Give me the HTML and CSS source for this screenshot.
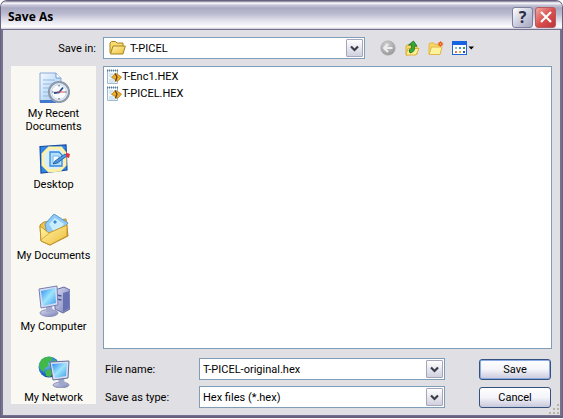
FILE: index.html
```html
<!DOCTYPE html>
<html lang="en">
<head>
<meta charset="utf-8">
<title>Save As</title>
<link rel="stylesheet" href="styles.css">
</head>
<body>
<svg class="defs" aria-hidden="true">
  <defs>
    <linearGradient id="blue" x1="0" y1="0" x2="1" y2="1"><stop offset="0" stop-color="#2a8cf0"/><stop offset=".5" stop-color="#9ee4fc"/><stop offset="1" stop-color="#3d9cec"/></linearGradient>
    <linearGradient id="gold" x1="0" y1="0" x2="1" y2="1"><stop offset="0" stop-color="#fff6a8"/><stop offset="1" stop-color="#eebc3c"/></linearGradient>
    <linearGradient id="steel" x1="0" y1="0" x2="1" y2="1"><stop offset="0" stop-color="#d8daf2"/><stop offset="1" stop-color="#7880b4"/></linearGradient>
    <linearGradient id="paper" x1="0" y1="0" x2="1" y2="1"><stop offset="0" stop-color="#f4faff"/><stop offset="1" stop-color="#9cc4ee"/></linearGradient>
    <radialGradient id="globe" cx=".35" cy=".3" r=".75"><stop offset="0" stop-color="#8fe0ff"/><stop offset=".6" stop-color="#2878d8"/><stop offset="1" stop-color="#123c94"/></radialGradient>
    <radialGradient id="grey" cx=".4" cy=".3" r=".7"><stop offset="0" stop-color="#d2d2d4"/><stop offset="1" stop-color="#98989c"/></radialGradient>
    <symbol id="chevron" viewBox="0 0 9 7"><path d="M1 1.5 4.5 5 8 1.5" fill="none" stroke="#3a3c48" stroke-width="2.2"/></symbol>
    <symbol id="hexfile" viewBox="0 0 16 16">
      <path d="M1.500 1.500h10v13h-10z" fill="#f2f8fd" stroke="#a4b8cc"/>
      <path d="M1 1.500h11" stroke="#5b7d98" stroke-width="2" stroke-dasharray="1 1"/>
      <path d="M3 5h4M3 7h3M3 11h5M3 13h6" stroke="#b5d5ea"/>
      <path d="M5.500 8.500 9 4.500l2 .5 4.500 3-3 3.500-3 1L9 10z" fill="#eeae2c" stroke="#b87d1c" stroke-width=".8"/>
      <path d="M9 4.500 11 8l-1.500 4" fill="none" stroke="#5e4319" stroke-width="1.300"/>
    </symbol>
  </defs>
</svg>
<main class="window">
  <header class="titlebar">
    <h1>Save As</h1>
    <button class="cap help" type="button" aria-label="Help">?</button>
    <button class="cap close" type="button" aria-label="Close"><svg viewBox="0 0 12 12"><path d="M1 1l10 10M11 1L1 11" stroke="#fff" stroke-width="2.200"/></svg></button>
  </header>
  <form class="content">
    <div class="lookin">
      <label for="folder">Save in:</label>
      <div class="combo">
        <svg class="folder" viewBox="0 0 17 16"><path d="M1 13V3l1.500-1.500h4L8 3h6v3" fill="#f8dc70" stroke="#a88420"/><path d="M1.500 14 4 6h12.300L14 14z" fill="url(#gold)" stroke="#a88420"/></svg>
        <select id="folder"><option>T-PICEL</option></select>
        <span class="drop"><svg><use href="#chevron"/></svg></span>
      </div>
      <div class="tools">
        <button type="button" aria-label="Back"><svg viewBox="0 0 16 16"><circle cx="8" cy="8" r="7.300" fill="url(#grey)" stroke="#b4b4b8" stroke-width=".6"/><path d="M12.500 8H4.500M8 4 4 8l4 4" fill="none" stroke="#eee" stroke-width="2"/></svg></button>
        <button type="button" aria-label="Up one level"><svg viewBox="0 0 16 16"><path d="M2 15V6l1-1h3l1 1h6v8z" fill="#f6d766" stroke="#d9b03c"/><path d="M2 15 4 8.500h11L12 15z" fill="#fff090" stroke="#dfb23a"/><path d="M6 13c4-1 5-3 4.500-7H13L9.500 1 4.500 5h3c.5 3-.5 4-2.500 5z" fill="#38a838" stroke="#137022" stroke-width=".8"/></svg></button>
        <button type="button" aria-label="New folder"><svg viewBox="0 0 16 16"><path d="M1 14V4l1-1h4l1 1.500h5V14z" fill="#f6d766" stroke="#e2b94a"/><path d="M1 14.500 3.500 7H14l-2 7.500z" fill="#fff39c" stroke="#e4b648"/><path d="M12.500 1v6M9.500 4h6M10.500 2l4 4M14.500 2l-4 4" stroke="#f08040"/><circle cx="12.500" cy="4" r="2" fill="#e94f1c"/><circle cx="12.500" cy="4" r=".8" fill="#ffd35e"/></svg></button>
        <button class="views" type="button" aria-label="View menu"><svg viewBox="0 0 22 16"><rect x=".5" y="1.500" width="14" height="13" fill="#fff" stroke="#1e68d8"/><path d="M0 3h15" stroke="#1764e0" stroke-width="4"/><path d="M3 7h2v2H3z" fill="#98b4c8"/><path d="M7 7h2v2H7z" fill="#468ec8"/><path d="M11 7h2v2h-2z" fill="#38a050"/><path d="M3 11h2v2H3z" fill="#e87848"/><path d="M7 11h2v2H7z" fill="#e0b838"/><path d="M11 11h2v2h-2z" fill="#2848c0"/><path d="M16.500 6.500h5.500l-2.700 3z" fill="#000"/></svg></button>
      </div>
    </div>
    <nav class="places">
      <a href="#recent"><svg viewBox="0 0 32 32"><path d="M2 1h16l5 5v24H2z" fill="url(#paper)" stroke="#8aa8d8"/><path d="M18 1v5h5" fill="#fff" stroke="#6f98d0"/><path d="M5 8h12M5 12h10M5 16h6M5 20h5M5 24h6" stroke="#8db9e8"/><path d="M2 28h16v3H2z" fill="#3f78cc"/><circle cx="21" cy="20" r="10" fill="#e9f2fb" stroke="#8c98ac" stroke-width="2.200"/><circle cx="21" cy="20" r="7.500" fill="#f8fcff" stroke="#c6d4e4"/><path d="M21 13v1.500M21 26v1.500M14 20h1.500M27 20h1.500" stroke="#456"/><path d="M16 21l5-.5 4-5" fill="none" stroke="#244a8c" stroke-width="1.800"/><path d="M19 20h8" stroke="#e05050"/></svg>My Recent<br>Documents</a>
      <a href="#desktop"><svg viewBox="0 0 32 32"><path d="M2 3.500 28 2l1 25-26 3z" fill="#2f86e4" stroke="#174ca4" stroke-width="1.200"/><path d="M11 5h12l4 5v12l-5 5-11 1-6-6V11z" fill="#d8effc" stroke="#fff0a4" stroke-width="3"/><path d="M12 9h9l3 3v11H12z" fill="#b4e0fb" stroke="#3687d8" stroke-width="1.300"/><path d="M15 13h6v7h-6z" fill="#f2fbff" stroke="#78b6e8"/><path d="M17 18 27 11l2 2-10 7-4 1z" fill="#4e9ae0" stroke="#194f94" stroke-width=".8"/><path d="M28 9.500l4 1.500-1 4-3-1z" fill="#d83848"/></svg>Desktop</a>
      <a href="#documents"><svg viewBox="0 0 32 32"><path d="M2 11 6 8l22-3 2 17-18 9-9-4z" fill="#f1c546" stroke="#b48a28"/><path d="M7 10 16 0l14 9-12 15-9-4z" fill="#8fcbf6" stroke="#5a97d4"/><path d="M11 10l6-6 9 6-9 10z" fill="#c8edff"/><path d="M17 6l2 2-2 2-2-2z" fill="#3c8bd8"/><path d="M2 12 11 19 29 11v11L12 31 3 27z" fill="url(#gold)" stroke="#c39428"/><path d="M3 26 14 17" fill="none" stroke="#dcae3e"/></svg>My Documents</a>
      <a href="#computer"><svg viewBox="0 0 32 32"><path d="M17 5l9-3 6 3v19l-7 4-8-4z" fill="url(#steel)" stroke="#666caa"/><path d="M25 8v19l6-4V6z" fill="#6870b4"/><path d="M18.500 10l5 1M18.500 14l5 1" stroke="#4b568e" stroke-width="1.500"/><ellipse cx="11" cy="28" rx="9" ry="3.500" fill="url(#steel)" stroke="#898fb8"/><path d="M8 21h6l1 6H8z" fill="#a4aacf"/><path d="M1 4 19 1l1 19-17 3z" fill="#d8dcf0" stroke="#7580b8"/><path d="M3 6l14-3 1 15-13 3z" fill="url(#blue)"/></svg>My Computer</a>
      <a href="#network"><svg viewBox="0 0 32 32"><circle cx="11" cy="11" r="10.500" fill="url(#globe)"/><path d="M3 4c4-4 9-4 12-2l-3 4-2 1 1 3-4 2-1 4-4-3-1-4zM7 15l5-2 4 3-4 5-4-1zM16 3l4 3-2 4-3-2z" fill="#42b84a"/><ellipse cx="23" cy="29" rx="8" ry="2.800" fill="url(#steel)" stroke="#9094b4"/><path d="M20 22h6l1 7h-6z" fill="#a0a8ca"/><path d="M12 6l19-1-1 17-15 2z" fill="#d9def2" stroke="#646e98"/><path d="M14 8l15-1-1 13-11 2z" fill="url(#blue)"/></svg>My Network</a>
    </nav>
    <ul class="files">
      <li><svg><use href="#hexfile"/></svg>T-Enc1.HEX</li>
      <li><svg><use href="#hexfile"/></svg>T-PICEL.HEX</li>
    </ul>
    <div class="fields">
      <label for="name">File name:</label>
      <div class="combo"><input id="name" type="text" value="T-PICEL-original.hex"><span class="drop"><svg><use href="#chevron"/></svg></span></div>
      <button class="push default" type="submit">Save</button>
      <label for="type">Save as type:</label>
      <div class="combo"><select id="type"><option>Hex files (*.hex)</option></select><span class="drop"><svg><use href="#chevron"/></svg></span></div>
      <button class="push" type="button">Cancel</button>
    </div>
    <svg class="grip" viewBox="0 0 12 12" aria-hidden="true"><path d="M9 1h2v2H9zM5 5h2v2H5zM9 5h2v2H9zM1 9h2v2H1zM5 9h2v2H5zM9 9h2v2H9z" fill="#b8b4a8"/></svg>
  </form>
</main>
</body>
</html>
```
FILE: styles.css
```css
* { box-sizing: border-box; }
body { margin: 0; background: #fff; color: #000; font: 11px/13px Roboto, "Liberation Sans", sans-serif; }
button, input, select { font: inherit; color: inherit; margin: 0; }
svg { display: block; flex: none; }
.defs { position: absolute; width: 0; height: 0; }
.window {
  display: flex; flex-direction: column;
  min-height: calc(100vh - 1px);
  border: 1px solid #66627f; border-bottom-width: 2px;
  border-radius: 7px 7px 0 0; overflow: hidden;
  background: #e0dfe3;
}
.titlebar {
  display: flex; align-items: center; gap: 2px;
  height: 28px; padding: 4px 6px 0 7px;
  background: linear-gradient(#76728f 0, #fff 2px, #c8c8da 4px, #a9a9c2 7px, #bcbcd0 13px, #e4e4ee 20px, #fff 26px, #c8c8d8 28px);
}
h1 { flex: 1; margin: 0; font: bold 12px/16px "Open Sans", "Noto Sans", sans-serif; }
.cap { display: flex; align-items: center; justify-content: center; width: 21px; height: 21px; padding: 0; border: 1px solid #7c809c; border-radius: 3px; }
.help { background: linear-gradient(135deg, #fff, #c4c5d8 60%, #a8a9c2); font: bold 16px/18px "Open Sans", sans-serif; color: #2c2c44; }
.close { border-color: #b75b62; background: linear-gradient(135deg, #f0a8a2, #d9504e 50%, #bd3538); }
.close svg { width: 12px; height: 12px; }
.content {
  position: relative; flex: 1;
  display: grid; grid-template: auto 1fr auto / 85px minmax(0, 1fr); column-gap: 7px;
  padding: 7px 8px 7px;
  border: solid #75718f; border-width: 1px 2px;
}
.lookin { grid-column: 1 / -1; display: grid; grid-template-columns: 85px minmax(0, 261fr) minmax(0, 180fr); column-gap: 7px; align-items: center; margin-bottom: 7px; }
.lookin label { text-align: right; }
.combo { display: flex; align-items: center; height: 22px; padding: 1px; border: 1px solid #7f9db9; background: #fff; }
.combo select, .combo input { flex: 1; min-width: 0; height: 18px; padding: 0 2px; border: 0; outline: 0; background: none; appearance: none; }
.folder { width: 17px; height: 16px; margin: 0 2px 0 4px; }
.drop { display: flex; align-items: center; justify-content: center; width: 17px; height: 18px; border: 1px solid #a5a6bc; border-radius: 1px; background: linear-gradient(#fff, #d0d0df); pointer-events: none; }
.drop svg { width: 9px; height: 7px; }
.tools { display: flex; gap: 8px; padding-left: 8px; }
.tools button { padding: 0; border: 0; background: none; }
.tools svg { width: 16px; height: 16px; }
.tools .views svg { width: 22px; }
.places { grid-row: 2 / 4; margin-bottom: 4px; padding-top: 6px; background: #faf8f3; }
.places a { display: flex; flex-direction: column; align-items: center; height: 71px; color: inherit; text-align: center; text-decoration: none; }
.places a:last-child { height: auto; }
.places svg { width: 32px; height: 32px; margin-bottom: 3px; }
.files { margin: 0; padding: 1px 2px; border: 1px solid #7f9db9; background: #fff; list-style: none; }
.files li { display: flex; align-items: center; height: 17px; }
.files svg { width: 16px; height: 16px; }
.fields { display: grid; grid-template-columns: 94px minmax(0, 246fr) minmax(0, 34fr) 72px; gap: 6px 0; align-items: center; padding: 9px 1px 0 2px; }
.push { grid-column: 4; height: 21px; padding: 0; border: 1px solid #35527f; border-radius: 3px; background: linear-gradient(#fff, #f4f4fa 50%, #c8c8dc); }
.default { box-shadow: inset 0 0 0 1px #8aabe4; }
.grip { position: absolute; right: 0; bottom: 0; width: 12px; height: 12px; }
```
